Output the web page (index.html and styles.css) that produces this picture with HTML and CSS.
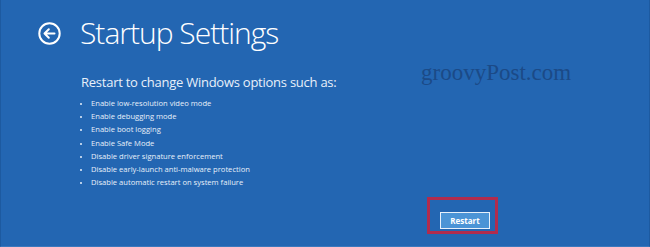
FILE: index.html
```html
<!DOCTYPE html>
<html lang="en">
<head>
    <meta charset="UTF-8">
    <meta name="viewport" content="width=device-width, initial-scale=1.0">
    <title>Startup Settings</title>
    <link rel="stylesheet" href="styles.css">
</head>
<body>
    <div class="screen">
        <div class="header">
            <span class="back">
                <svg width="23" height="23" viewBox="0 0 23 23">
                    <circle cx="11.5" cy="11.5" r="10.2" fill="none" stroke="#fff" stroke-width="2"/>
                    <path d="M6.5 11.5h10M10.8 7.2L6.5 11.5l4.3 4.3" fill="none" stroke="#fff" stroke-width="2" stroke-linecap="round" stroke-linejoin="round"/>
                </svg>
            </span>
            <h1 class="title">Startup Settings</h1>
        </div>
        <div class="content">
            <div class="options">
                <p class="lead">Restart to change Windows options such as:</p>
                <ul class="list">
                    <li>Enable low-resolution video mode</li>
                    <li>Enable debugging mode</li>
                    <li>Enable boot logging</li>
                    <li>Enable Safe Mode</li>
                    <li>Disable driver signature enforcement</li>
                    <li>Disable early-launch anti-malware protection</li>
                    <li>Disable automatic restart on system failure</li>
                </ul>
            </div>
            <div class="mark">groovyPost.com</div>
        </div>
        <div class="footer">
            <div class="highlight">
                <button class="restart">Restart</button>
            </div>
        </div>
    </div>
</body>
</html>
```

FILE: styles.css
```css
body{
    margin: 0;
    background-color: #2366b2;
    font-family: 'Open Sans', 'Noto Sans', sans-serif;
    color: #fff;
}
.screen{
    height: 247px;
    box-sizing: border-box;
    border-left: 1px solid #1d5aa0;
    border-right: 1px solid #1d5aa0;
    border-bottom: 1px solid #3a78bd;
    display: flex;
    flex-direction: column;
}
.header{
    display: flex;
    align-items: center;
    padding: 11px 0 0 37px;
    gap: 19px;
}
.back{
    display: flex;
}
.title{
    margin: 0;
    font-size: 30px;
    font-weight: 300;
    letter-spacing: -1px;
    line-height: 44px;
}
.content{
    display: flex;
    padding-left: 80px;
    margin-top: 19px;
}
.options{
    width: 340px;
}
.lead{
    margin: 0;
    font-size: 13px;
    letter-spacing: -0.25px;
    line-height: 16px;
    color: #e8f0fa;
}
.list{
    margin: 7px 0 0;
    padding: 0 0 0 10px;
    font-size: 7.6px;
    line-height: 13.2px;
    color: #e8f0fa;
}
.list li::marker{
    font-size: 7px;
}
.mark{
    margin-top: -14px;
    font-family: 'Liberation Serif', serif;
    font-size: 23px;
    color: #1b4a87;
}
.footer{
    display: flex;
    padding: 8px 0 0 426px;
}
.highlight{
    width: 71px;
    height: 37px;
    box-sizing: border-box;
    border: 3px solid #b02c4e;
    display: flex;
    align-items: center;
    justify-content: flex-end;
    padding: 10px 5px 0 0;
}
.restart{
    width: 50px;
    height: 17px;
    padding: 0;
    background-color: #4b94d6;
    border: 1.5px solid #e6f0fb;
    color: #fff;
    font-family: 'Open Sans', sans-serif;
    font-size: 8px;
    font-weight: 700;
}
```
